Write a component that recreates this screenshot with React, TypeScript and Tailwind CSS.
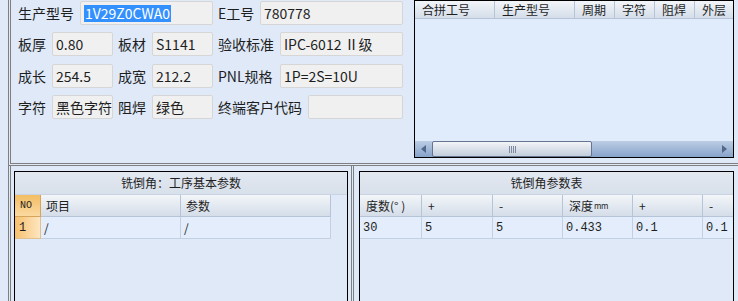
import React from "react";

type FieldDef = {
  label: string;
  lw: string;
  bw: string;
  value: string;
  selected?: boolean;
};

const ROWS: { mt: string; fields: FieldDef[] }[] = [
  {
    mt: "mt-[1px]",
    fields: [
      { label: "生产型号", lw: "w-[62px]", bw: "w-[133px]", value: "1V29Z0CWA0", selected: true },
      { label: "E工号", lw: "w-[42px] ml-[5px]", bw: "w-[143px]", value: "780778" },
    ],
  },
  {
    mt: "mt-[7px]",
    fields: [
      { label: "板厚", lw: "w-[34px]", bw: "w-[61px]", value: "0.80" },
      { label: "板材", lw: "w-[34px] ml-[5px]", bw: "w-[61px]", value: "S1141" },
      { label: "验收标准", lw: "w-[62px] ml-[5px]", bw: "w-[123px]", value: "IPC-6012 Ⅱ级" },
    ],
  },
  {
    mt: "mt-[8px]",
    fields: [
      { label: "成长", lw: "w-[34px]", bw: "w-[61px]", value: "254.5" },
      { label: "成宽", lw: "w-[34px] ml-[5px]", bw: "w-[61px]", value: "212.2" },
      { label: "PNL规格", lw: "w-[62px] ml-[5px]", bw: "w-[123px]", value: "1P=2S=10U" },
    ],
  },
  {
    mt: "mt-[7px]",
    fields: [
      { label: "字符", lw: "w-[34px]", bw: "w-[61px]", value: "黑色字符" },
      { label: "阻焊", lw: "w-[34px] ml-[5px]", bw: "w-[61px]", value: "绿色" },
      { label: "终端客户代码", lw: "w-[90px] ml-[5px]", bw: "w-[95px]", value: "" },
    ],
  },
];

const MERGE_COLS: { name: string; w: string }[] = [
  { name: "合拼工号", w: "w-[80px]" },
  { name: "生产型号", w: "w-[80px]" },
  { name: "周期", w: "w-[40px]" },
  { name: "字符", w: "w-[40px]" },
  { name: "阻焊", w: "w-[40px]" },
  { name: "外层", w: "w-[40px]" },
];

const CHAMFER_COLS: { name: React.ReactNode; value: string; w: string }[] = [
  { name: "度数(° )", value: "30", w: "w-[62px]" },
  { name: "+", value: "5", w: "w-[71px]" },
  { name: "-", value: "5", w: "w-[70px]" },
  {
    name: (
      <>
        深度<span className="text-[8px] tracking-[-0.5px] ml-[1px]">mm</span>
      </>
    ),
    value: "0.433",
    w: "w-[70px]",
  },
  { name: "+", value: "0.1", w: "w-[70px]" },
  { name: "-", value: "0.1", w: "w-[70px]" },
];

const headCell =
  "h-full shrink-0 flex items-center border-r border-b border-[#b6c4d8] bg-gradient-to-b from-[#f3f6f9] to-[#d4dde9]";
const dataCell =
  "h-full shrink-0 flex items-center border-r border-b border-[#c3d0e2] bg-[#e3edfb]";

const Field = ({ f }: { f: FieldDef }) => (
  <>
    <span className={`${f.lw} shrink-0 whitespace-nowrap`}>{f.label}</span>
    <div
      className={`${f.bw} h-[24px] shrink-0 flex items-center pl-[3px] bg-[#f0f0f0] border border-[#d6d6d6] rounded-[2px] whitespace-nowrap overflow-hidden`}
    >
      {f.selected ? (
        <span className="bg-[#3390ff] text-white leading-[17px] px-[1px]">{f.value}</span>
      ) : (
        f.value
      )}
    </div>
  </>
);

const ScrollBar = () => (
  <div className="h-[16px] shrink-0 flex items-stretch bg-gradient-to-b from-[#bccde4] to-[#87a3ca]">
    <div className="w-[17px] flex items-center justify-center">
      <span className="w-0 h-0 border-y-[4px] border-y-transparent border-r-[5px] border-r-[#52678a]" />
    </div>
    <div className="w-[160px] flex items-center justify-center border border-[#65758f] rounded-[2px] bg-gradient-to-b from-[#f2f4f7] to-[#c3cedc]">
      <div className="flex gap-[1px]">
        <span className="w-[1px] h-[7px] bg-[#7d8aa0]" />
        <span className="w-[1px] h-[7px] bg-[#7d8aa0]" />
        <span className="w-[1px] h-[7px] bg-[#7d8aa0]" />
        <span className="w-[1px] h-[7px] bg-[#7d8aa0]" />
      </div>
    </div>
    <div className="flex-1" />
    <div className="w-[17px] flex items-center justify-center">
      <span className="w-0 h-0 border-y-[4px] border-y-transparent border-l-[5px] border-l-[#52678a]" />
    </div>
  </div>
);

const App = () => {
  return (
    <div className="w-[738px] h-[301px] overflow-hidden bg-[#dfe9f8] text-[#1e1e1e] font-['Noto_Sans_CJK_SC',sans-serif]">
      {/* top: order info + merge grid */}
      <div className="ml-[8px] h-[166px] flex border-double border-l-[3px] border-b-[3px] border-[#7f7f7f]">
        <div className="w-[392px] pl-[7px] flex flex-col text-[14px]">
          {ROWS.map((row, i) => (
            <div key={i} className={`${row.mt} h-[24px] flex items-center`}>
              {row.fields.map((f, j) => (
                <Field key={j} f={f} />
              ))}
            </div>
          ))}
        </div>
        <div className="ml-[11px] w-[320px] h-[158px] flex flex-col border border-black overflow-hidden text-[12px]">
          <div className="h-[18px] shrink-0 flex">
            {MERGE_COLS.map((c) => (
              <div key={c.name} className={`${c.w} ${headCell} pl-[7px] whitespace-nowrap`}>
                {c.name}
              </div>
            ))}
          </div>
          <div className="flex-1 bg-[#e0ebfb]" />
          <ScrollBar />
        </div>
      </div>

      {/* bottom: chamfer panels */}
      <div className="ml-[8px] h-[135px] flex text-[12px]">
        <div className="w-[344px] h-full shrink-0 border-double border-l-[3px] border-r border-[#7f7f7f] pl-[3px] pt-[5px]">
          <div className="w-[334px] h-[140px] border border-black flex flex-col">
            <div className="h-[23px] shrink-0 flex items-center justify-center bg-gradient-to-b from-[#e3e8f0] to-[#d8e0eb] border-b border-[#c9d3e1]">
              铣倒角：工序基本参数
            </div>
            <div className="h-[22px] shrink-0 flex">
              <div className="w-[26px] h-full shrink-0 flex items-center pl-[5px] text-[10px] border-r border-b border-[#d7a55a] bg-gradient-to-b from-[#f3bd62] to-[#fbd9a0] font-['Liberation_Mono',monospace]">
                NO
              </div>
              <div className={`w-[140px] ${headCell} pl-[5px]`}>项目</div>
              <div className={`w-[150px] ${headCell} pl-[5px]`}>参数</div>
            </div>
            <div className="h-[22px] shrink-0 flex">
              <div className="w-[26px] h-full shrink-0 flex items-center pl-[4px] border-r border-b border-[#e2c08d] bg-gradient-to-r from-[#f7c06c] to-[#fde6bf] font-['Liberation_Mono',monospace]">
                1
              </div>
              <div className={`w-[140px] ${dataCell} pl-[3px]`}>/</div>
              <div className={`w-[150px] ${dataCell} pl-[3px]`}>/</div>
            </div>
            <div className="flex-1 bg-[#dfe9f8]" />
          </div>
        </div>

        <div className="flex-1 h-full ml-[1px] border-l border-[#7f7f7f] pl-[5px] pt-[5px]">
          <div className="w-[375px] h-[140px] border border-black flex flex-col overflow-hidden">
            <div className="h-[23px] shrink-0 flex items-center justify-center bg-gradient-to-b from-[#e3e8f0] to-[#d8e0eb] border-b border-[#c9d3e1]">
              铣倒角参数表
            </div>
            <div className="h-[22px] shrink-0 flex">
              {CHAMFER_COLS.map((c, i) => (
                <div key={i} className={`${c.w} ${headCell} pl-[6px] whitespace-nowrap`}>
                  {c.name}
                </div>
              ))}
            </div>
            <div className="h-[22px] shrink-0 flex font-['Liberation_Mono',monospace]">
              {CHAMFER_COLS.map((c, i) => (
                <div key={i} className={`${c.w} ${dataCell} pl-[3px]`}>
                  {c.value}
                </div>
              ))}
            </div>
            <div className="flex-1 bg-[#dfe9f8]" />
          </div>
        </div>
      </div>
    </div>
  );
};

export default App;
